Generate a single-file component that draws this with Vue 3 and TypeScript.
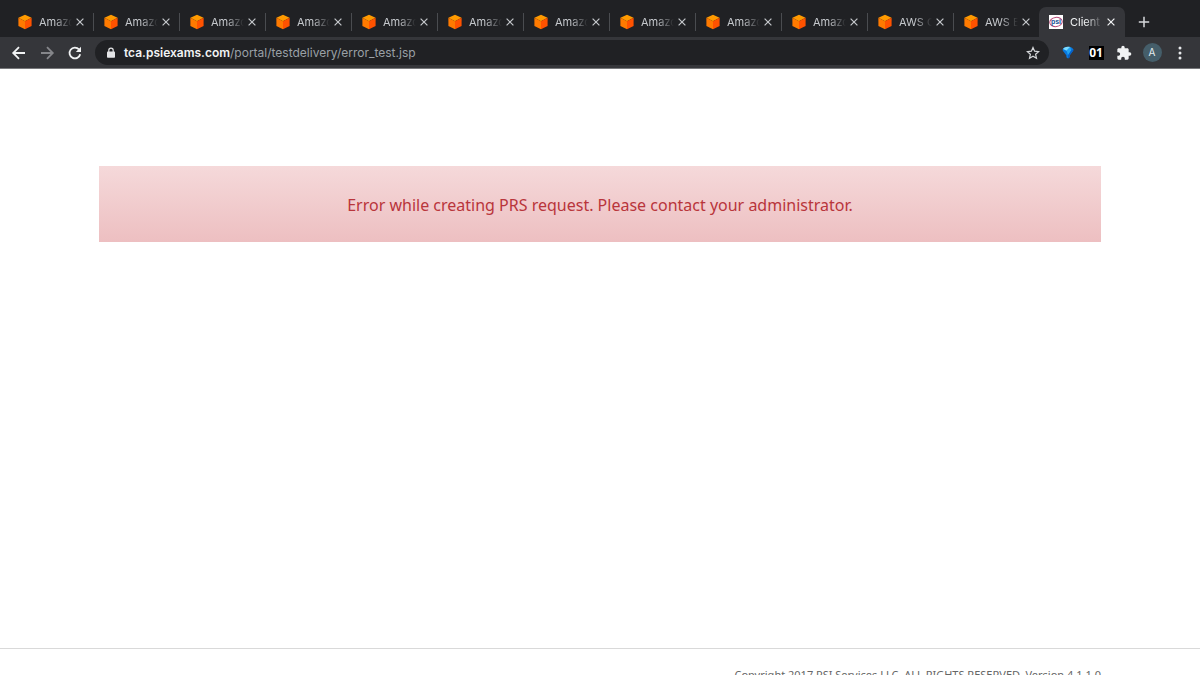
<script setup lang="ts">
import { ref } from 'vue'

interface Tab {
  title: string
  icon: 'cube' | 'psi'
}

const tabs: Tab[] = [
  ...Array.from({ length: 10 }, (): Tab => ({ title: 'Amazo', icon: 'cube' })),
  { title: 'AWS C', icon: 'cube' },
  { title: 'AWS E', icon: 'cube' },
  { title: 'Client', icon: 'psi' },
]
const active = ref(12)
</script>

<template>
  <div class="window">
    <header class="chrome">
      <nav class="tabs" aria-label="Tabs">
        <div v-for="(tab, i) in tabs" :key="i" class="tab" :class="{ active: i === active, plain: i === active - 1 }">
          <button class="pick" type="button" @click="active = i">
            <svg v-if="tab.icon === 'cube'" class="favicon" viewBox="0 0 16 16" aria-hidden="true">
              <path d="M8 .8 14.600 3.800 8 7.200 1.400 3.800z" fill="#ff9a00" />
              <path d="M1.400 3.800 8 7.200v8L1.400 12z" fill="#ff7a00" />
              <path d="M14.600 3.800 8 7.200v8l6.600-3.200z" fill="#ff5200" />
            </svg>
            <svg v-else class="favicon" viewBox="0 0 16 16" aria-hidden="true">
              <path d="M1 1h14v14H1z" fill="#fff" />
              <ellipse cx="8" cy="8" rx="6.3" ry="4.6" fill="#fff" stroke="#b84a78" stroke-width="1" transform="rotate(-7 8 8)" />
              <text x="8" y="10" text-anchor="middle" class="psi">psi</text>
            </svg>
            <span class="title">{{ tab.title }}</span>
          </button>
          <button class="close" type="button" aria-label="Close tab">
            <svg viewBox="0 0 10 10"><path d="M1.6 1.6l6.8 6.8M8.4 1.6 1.6 8.4" /></svg>
          </button>
        </div>
        <button class="new" type="button" aria-label="New tab">
          <svg viewBox="0 0 12 12"><path d="M6 .8v10.4M.8 6h10.4" /></svg>
        </button>
      </nav>

      <div class="toolbar">
        <div class="nav">
          <button type="button" aria-label="Back">
            <svg viewBox="0 0 16 16" class="arrow"><path d="M14 8H2.5M8 2.2 2.2 8 8 13.8" /></svg>
          </button>
          <button type="button" aria-label="Forward" class="dim">
            <svg viewBox="0 0 16 16" class="arrow"><path d="M2 8h11.5M8 2.2 13.8 8 8 13.8" /></svg>
          </button>
          <button type="button" aria-label="Reload">
            <svg viewBox="0 0 16 16" class="arrow">
              <path d="M13.2 9.2A5.4 5.4 0 1 1 12 4.4" />
              <path d="M14 1.8V7H8.8z" class="solid" />
            </svg>
          </button>
        </div>
        <div class="omnibox">
          <svg class="lock" viewBox="0 0 10 12" aria-hidden="true">
            <path d="M2.8 5V3.3a2.2 2.2 0 0 1 4.4 0V5" fill="none" stroke="#e4e5e7" stroke-width="1.2" />
            <rect x="1" y="4.6" width="8" height="6.2" rx=".8" fill="#e4e5e7" />
          </svg>
          <a class="url" href="#"><b>tca.psiexams.com</b>/portal/testdelivery/error_test.jsp</a>
          <button type="button" aria-label="Bookmark this tab" class="star">
            <svg viewBox="0 0 14 14">
              <path d="M7 1.5 8.6 5.2l4 .4-3 2.7.9 4L7 10.2l-3.5 2.1.9-4-3-2.7 4-.4z" />
            </svg>
          </button>
        </div>
        <div class="extensions">
          <button type="button" aria-label="Gem extension">
            <svg viewBox="0 0 16 16">
              <path d="M2.600 4.600C3.200 2.800 5.200 1.700 8 1.700s4.800 1.100 5.400 2.900c0 1-.6 1.800-1.400 2.700L9.600 10.500v1.800L8 13.400l-1.600-1.100v-1.800L4 7.300C3.200 6.400 2.600 5.600 2.600 4.600z" fill="#0878e0" />
              <path d="M8 1.700c-2.800 0-4.400 1-5 2.400l3.600 1.700L10.200 2C9.500 1.800 8.800 1.700 8 1.700z" fill="#7bdcff" />
              <path d="M6.600 5.800 10.200 2l1 3.600L8 10.200z" fill="#22a5f3" />
              <path d="M11.200 5.600l2.200-1c0 1-.6 1.800-1.400 2.700L9.600 10.500v1.800L8 13.400v-3.200z" fill="#0760c8" />
            </svg>
          </button>
          <button type="button" aria-label="01 extension"><span class="digits">01</span></button>
          <button type="button" aria-label="Extensions">
            <svg viewBox="0 0 24 24">
              <path fill="#f1f3f4" d="M20.500 11H19V7c0-1.100-.9-2-2-2h-4V3.500a2.500 2.500 0 0 0-5 0V5H4c-1.100 0-2 .9-2 2v3.800h1.500c1.500 0 2.700 1.200 2.700 2.700S5 16.200 3.500 16.200H2V20c0 1.100.9 2 2 2h3.800v-1.500c0-1.500 1.200-2.700 2.700-2.700s2.700 1.200 2.700 2.700V22H17c1.100 0 2-.9 2-2v-4h1.500a2.500 2.500 0 0 0 0-5z" />
            </svg>
          </button>
          <button type="button" aria-label="Profile"><span class="avatar">A</span></button>
          <button type="button" aria-label="Menu">
            <svg viewBox="0 0 16 16" fill="#e8eaed">
              <circle cx="8" cy="3" r="1.5" /><circle cx="8" cy="8" r="1.5" /><circle cx="8" cy="13" r="1.5" />
            </svg>
          </button>
        </div>
      </div>
    </header>

    <main class="page">
      <p class="error" role="alert">Error while creating PRS request. Please contact your administrator.</p>
    </main>

    <footer class="footer">Copyright 2017 PSI Services LLC. ALL RIGHTS RESERVED. Version 4.1.1.0</footer>
  </div>
</template>

<style>
body {
  margin: 0;
  background: #fff;
}
</style>

<style scoped>
.window {
  display: flex;
  flex-direction: column;
  height: 100vh;
  overflow: hidden;
  font-family: Inter, "Liberation Sans", sans-serif;
}
button {
  display: flex;
  align-items: center;
  justify-content: center;
  padding: 0;
  border: 0;
  background: none;
  color: inherit;
  font: inherit;
}
.chrome {
  flex: none;
  background: #202124;
}
.tabs {
  display: flex;
  height: 37px;
  box-sizing: border-box;
  padding: 7px 8px 0;
}
.tab {
  position: relative;
  display: flex;
  flex: 0 1 86px;
  align-items: center;
  min-width: 0;
  box-sizing: border-box;
  padding: 0 7px 0 9px;
  color: #c4c7cb;
}
.tab::after {
  content: "";
  position: absolute;
  right: 0;
  top: 6px;
  width: 1px;
  height: 18px;
  background: #4a4c50;
}
.tab.active::after,
.tab.plain::after {
  display: none;
}
.tab.active {
  margin-left: -1px;
  border-radius: 7px 7px 0 0;
  background: #35363a;
  color: #f1f3f4;
}
.pick {
  flex: 1;
  min-width: 0;
  gap: 6px;
  justify-content: flex-start;
}
.favicon {
  flex: none;
  width: 16px;
  height: 16px;
}
.psi {
  font: bold 7px "Liberation Sans", sans-serif;
  fill: #164f94;
}
.title {
  flex: 1;
  overflow: hidden;
  font-size: 11px;
  line-height: 16px;
  text-align: left;
  white-space: nowrap;
  mask-image: linear-gradient(to right, #000 16px, transparent 33px);
}
.close {
  flex: none;
  width: 14px;
  height: 16px;
}
.close svg {
  width: 10px;
  height: 10px;
  fill: none;
  stroke: currentColor;
  stroke-width: 1.2;
}
.new {
  width: 24px;
  margin-left: 7px;
}
.new svg {
  width: 12px;
  height: 12px;
  fill: none;
  stroke: #d5d7da;
  stroke-width: 1.5;
}
.toolbar {
  display: flex;
  align-items: center;
  height: 32px;
  padding: 0 6px 0 5px;
  border-bottom: 1px solid #77787b;
  box-sizing: border-box;
  background: #35363a;
}
.nav {
  display: flex;
  margin-right: 6px;
}
.nav button {
  width: 28px;
  height: 28px;
}
.arrow {
  width: 16px;
  height: 16px;
  fill: none;
  stroke: #f1f3f4;
  stroke-width: 1.8;
}
.arrow .solid {
  fill: #f1f3f4;
  stroke: none;
}
.dim .arrow {
  stroke: #85868a;
}
.omnibox {
  display: flex;
  flex: 1;
  align-items: center;
  height: 25px;
  padding: 0 9px 0 11px;
  border-radius: 13px;
  background: #202124;
}
.lock {
  width: 10px;
  height: 12px;
  margin-right: 8px;
}
.url {
  flex: 1;
  color: #9aa0a6;
  font-size: 12px;
  line-height: 16px;
  text-decoration: none;
}
.url b {
  color: #f1f3f4;
  font-weight: 600;
}
.star svg {
  width: 14px;
  height: 14px;
  fill: none;
  stroke: #d5d7da;
  stroke-width: 1.2;
}
.extensions {
  display: flex;
  margin-left: 5px;
}
.extensions button {
  width: 28px;
  height: 28px;
}
.extensions svg {
  width: 16px;
  height: 16px;
}
.digits {
  width: 15px;
  background: #000;
  color: #fff;
  font: bold 12px/14px "Noto Sans", sans-serif;
}
.avatar {
  width: 19px;
  border-radius: 50%;
  background: #455e6a;
  color: #e4edf0;
  font-size: 10px;
  line-height: 19px;
}
.page {
  flex: 1;
  padding: 97px 99px 0;
}
.error {
  margin: 0;
  padding: 27px 20px 25px;
  background: linear-gradient(#f5d9da, #edbfc1);
  color: #b9353b;
  font: 16px/24px "Noto Sans", "Open Sans", sans-serif;
  text-align: center;
}
.footer {
  flex: none;
  height: 27px;
  box-sizing: border-box;
  padding: 16px 99px 0;
  border-top: 1px solid #d9d9d9;
  color: #666;
  font: 11px/20px "Noto Sans", sans-serif;
  text-align: right;
}
</style>
